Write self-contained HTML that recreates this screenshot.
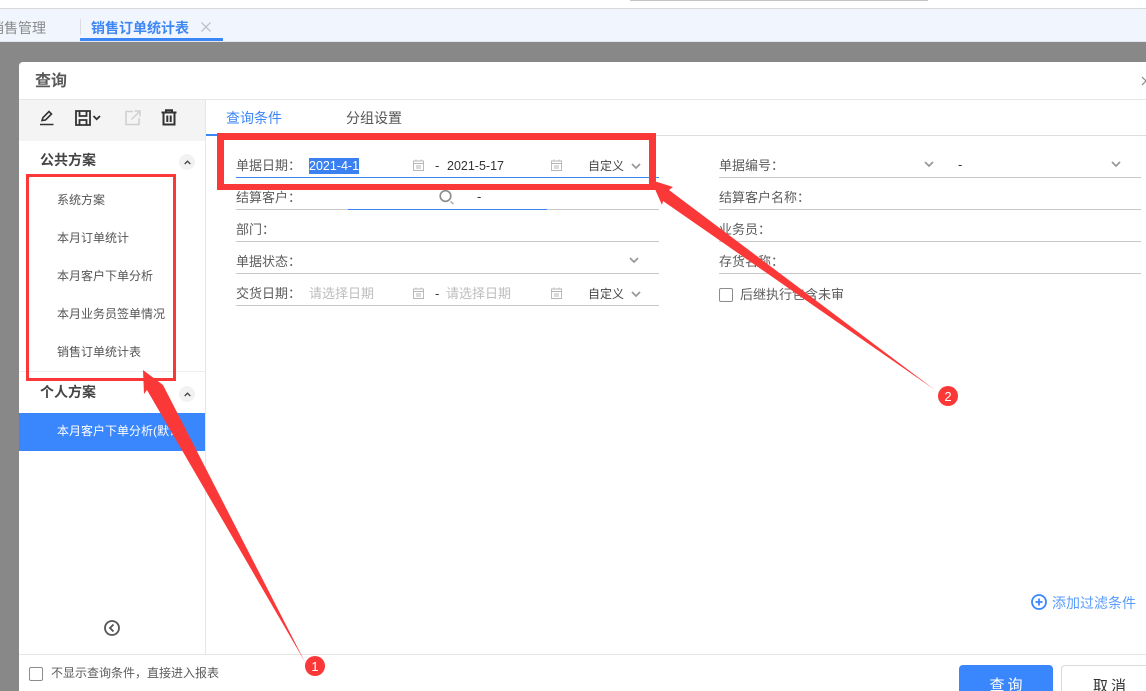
<!DOCTYPE html>
<html lang="zh">
<head>
<meta charset="utf-8">
<title>查询</title>
<style>
html,body{margin:0;padding:0;width:1146px;height:691px;overflow:hidden}
body{position:relative;background:#888;font-family:"Liberation Sans","Noto Sans CJK SC",sans-serif;font-size:13px;color:#555}
.a{position:absolute}
.t{position:absolute;white-space:nowrap;line-height:16px;font-size:13px;color:#5c5c5c}
.l{position:absolute;height:1px;background:#c8c8c8}
.b{position:absolute;height:1px;background:#3d86f5}
svg{position:absolute;overflow:visible}
.ph{color:#bdbdbd}
.blk{color:#333}
.d{font-size:12.500px}
.menu{position:absolute;left:57px;white-space:nowrap;font-size:12px;line-height:16px;color:#555}
.h{position:absolute;left:40px;font-size:14px;font-weight:bold;color:#444;line-height:18px;white-space:nowrap}
.cb{position:absolute;width:12px;height:12px;border:1px solid #8c8c8c;border-radius:2px;background:#fff}
</style>
</head>
<body>
<div class="a" style="left:0;top:0;width:1146px;height:8px;background:#fff"></div>
<div class="a" style="left:0;top:8px;width:1146px;height:1px;background:#d9d9d9"></div>
<div class="a" style="left:630px;top:0;width:298px;height:1px;background:#c4c4c4"></div>
<div class="a" style="left:0;top:9px;width:1146px;height:32px;background:#f0f5fe"></div>
<div class="a" style="left:0;top:41px;width:1146px;height:1px;background:#e3e6ea"></div>
<div class="a" style="left:0;top:18px;width:46px;height:20px;overflow:hidden"><span class="t" style="left:-10px;top:1px;font-size:14px;line-height:18px;color:#8a8a8a">销售管理</span></div>
<div class="a" style="left:80px;top:19px;width:1px;height:16px;background:#d9dde3"></div>
<span class="t" style="left:91px;top:19px;font-size:14px;line-height:18px;font-weight:bold;color:#3d86f5">销售订单统计表</span>
<svg style="left:201px;top:22px" width="10" height="10" viewBox="0 0 10 10"><path d="M.5.5l9 9M9.500.5l-9 9" stroke="#bcc2cc" stroke-width="1.300" fill="none"/></svg>
<div class="a" style="left:80px;top:38px;width:143px;height:3px;background:#3d86f5"></div>

<!-- dialog -->
<div class="a" style="left:19px;top:62px;width:1127px;height:629px;background:#fff;border-radius:4px 0 0 0"></div>
<span class="t" style="left:35px;top:71px;font-size:16px;line-height:22px;font-weight:bold;color:#5a5a5a">查询</span>
<svg style="left:1141px;top:76px" width="6" height="10" viewBox="0 0 6 10"><path d="M1 1l4 4-4 4" stroke="#8a8a8a" stroke-width="1.200" fill="none"/></svg>
<div class="a" style="left:19px;top:99px;width:1127px;height:1px;background:#e6e6e6"></div>

<!-- left toolbar -->
<div class="a" style="left:19px;top:100px;width:186px;height:41px;background:#f4f4f4"></div>
<div class="a" style="left:205px;top:100px;width:1px;height:554px;background:#e6e6e6"></div>
<svg style="left:39px;top:109px" width="16" height="17" viewBox="0 0 16 17"><path d="M3 11.500L4 8.500 10 2.500l2.500 2.500-6 6zM1 15.500h13.500" stroke="#333" stroke-width="1.600" fill="none"/></svg>
<svg style="left:75px;top:110px" width="28" height="16" viewBox="0 0 28 16"><path d="M1 1h14v14H1zM4.500 1v5h7V1M4.500 15V10h7v5" stroke="#333" stroke-width="1.800" fill="none"/><path d="M18.500 6l3.200 3.200L25 6" stroke="#333" stroke-width="1.800" fill="none"/></svg>
<svg style="left:125px;top:110px" width="16" height="16" viewBox="0 0 16 16"><path d="M8 1.500H1v13h13V8M6.500 9.500L14.500 1.500M9.500 1h5.500v5.500" stroke="#cfcfcf" stroke-width="1.500" fill="none"/></svg>
<svg style="left:161px;top:109px" width="16" height="17" viewBox="0 0 16 17"><path d="M.5 3.500h15M5 3.500V1.200h6v2.300M2.500 3.500v12h11v-12M6.300 6.500v6.500M9.700 6.500v6.500" stroke="#333" stroke-width="2" fill="none"/></svg>

<!-- left list -->
<span class="h" style="top:151px">公共方案</span>
<div class="a" style="left:179px;top:154px;width:16px;height:16px;border-radius:50%;background:#f2f2f2"></div>
<svg style="left:184px;top:160px" width="7" height="5" viewBox="0 0 7 5"><path d="M.7 4L3.500 1.200 6.300 4" stroke="#444" stroke-width="1.300" fill="none"/></svg>
<span class="menu" style="top:192px">系统方案</span>
<span class="menu" style="top:230px">本月订单统计</span>
<span class="menu" style="top:268px">本月客户下单分析</span>
<span class="menu" style="top:306px">本月业务员签单情况</span>
<span class="menu" style="top:344px">销售订单统计表</span>
<div class="a" style="left:19px;top:371px;width:186px;height:1px;background:#eee"></div>
<span class="h" style="top:383px">个人方案</span>
<div class="a" style="left:179px;top:386px;width:16px;height:16px;border-radius:50%;background:#f2f2f2"></div>
<svg style="left:184px;top:392px" width="7" height="5" viewBox="0 0 7 5"><path d="M.7 4L3.500 1.200 6.300 4" stroke="#444" stroke-width="1.300" fill="none"/></svg>
<div class="a" style="left:19px;top:413px;width:186px;height:38px;background:#3a87fd"></div>
<span class="menu" style="top:423px;color:#fff">本月客户下单分析(默认)</span>
<svg style="left:104px;top:620px" width="16" height="16" viewBox="0 0 16 16"><circle cx="8" cy="8" r="7" stroke="#555" stroke-width="1.800" fill="none"/><path d="M9.500 4.500L6 8l3.500 3.500" stroke="#555" stroke-width="1.800" fill="none"/></svg>

<!-- tabs -->
<span class="t" style="left:226px;top:109px;font-size:14px;line-height:18px;color:#3d86f5">查询条件</span>
<span class="t" style="left:346px;top:109px;font-size:14px;line-height:18px;color:#555">分组设置</span>
<div class="a" style="left:206px;top:135px;width:940px;height:1px;background:#dedede"></div>
<div class="a" style="left:206px;top:134px;width:80px;height:2px;background:#3d86f5"></div>

<!-- form left -->
<span class="t" style="left:236px;top:158px">单据日期：</span>
<span class="a d" style="left:309px;top:158px;height:16px;line-height:16px;background:#3a80f0;color:#fff;white-space:nowrap">2021-4-1</span>
<svg style="left:413px;top:159px" width="11" height="12" viewBox="0 0 11 12"><path d="M.5 2h10v9.500H.5zM.5 4.500h10M3 .5v2M8 .5v2M3 7h5M3 9h5" stroke="#b5b5b5" stroke-width=".9" fill="none"/></svg>
<span class="t blk" style="left:435px;top:158px">-</span>
<span class="t blk d" style="left:447px;top:158px">2021-5-17</span>
<svg style="left:551px;top:159px" width="11" height="12" viewBox="0 0 11 12"><path d="M.5 2h10v9.500H.5zM.5 4.500h10M3 .5v2M8 .5v2M3 7h5M3 9h5" stroke="#b5b5b5" stroke-width=".9" fill="none"/></svg>
<span class="t" style="left:588px;top:158px;font-size:12px;color:#444">自定义</span>
<svg style="left:631px;top:163px" width="10" height="7" viewBox="0 0 10 7"><path d="M1 1l4 4 4-4" stroke="#999" stroke-width="1.700" fill="none"/></svg>
<div class="b" style="left:236px;top:177px;width:423px"></div>

<span class="t" style="left:236px;top:190px">结算客户：</span>
<svg style="left:438px;top:189px" width="17" height="17" viewBox="0 0 17 17"><circle cx="7.500" cy="7" r="5.300" stroke="#8f8f8f" stroke-width="1.700" fill="none"/><path d="M12.500 12.500l3 2.500" stroke="#b0b0b0" stroke-width="1.500" fill="none"/></svg>
<span class="t blk" style="left:477px;top:189px">-</span>
<div class="l" style="left:236px;top:209px;width:423px"></div>
<div class="b" style="left:348px;top:209px;width:199px"></div>

<span class="t" style="left:236px;top:222px">部门：</span>
<div class="l" style="left:236px;top:241px;width:423px"></div>
<span class="t" style="left:236px;top:254px">单据状态：</span>
<svg style="left:629px;top:257px" width="10" height="7" viewBox="0 0 10 7"><path d="M1 1l4 4 4-4" stroke="#999" stroke-width="1.700" fill="none"/></svg>
<div class="l" style="left:236px;top:273px;width:423px"></div>

<span class="t" style="left:236px;top:286px">交货日期：</span>
<span class="t ph" style="left:309px;top:286px">请选择日期</span>
<svg style="left:413px;top:287px" width="11" height="12" viewBox="0 0 11 12"><path d="M.5 2h10v9.500H.5zM.5 4.500h10M3 .5v2M8 .5v2M3 7h5M3 9h5" stroke="#b5b5b5" stroke-width=".9" fill="none"/></svg>
<span class="t blk" style="left:435px;top:286px">-</span>
<span class="t ph" style="left:446px;top:286px">请选择日期</span>
<svg style="left:551px;top:287px" width="11" height="12" viewBox="0 0 11 12"><path d="M.5 2h10v9.500H.5zM.5 4.500h10M3 .5v2M8 .5v2M3 7h5M3 9h5" stroke="#b5b5b5" stroke-width=".9" fill="none"/></svg>
<span class="t" style="left:588px;top:286px;font-size:12px;color:#444">自定义</span>
<svg style="left:631px;top:291px" width="10" height="7" viewBox="0 0 10 7"><path d="M1 1l4 4 4-4" stroke="#999" stroke-width="1.700" fill="none"/></svg>
<div class="l" style="left:236px;top:305px;width:423px"></div>

<!-- form right -->
<span class="t" style="left:719px;top:158px">单据编号：</span>
<svg style="left:924px;top:161px" width="10" height="7" viewBox="0 0 10 7"><path d="M1 1l4 4 4-4" stroke="#999" stroke-width="1.700" fill="none"/></svg>
<span class="t blk" style="left:958px;top:157px">-</span>
<svg style="left:1111px;top:161px" width="10" height="7" viewBox="0 0 10 7"><path d="M1 1l4 4 4-4" stroke="#999" stroke-width="1.700" fill="none"/></svg>
<div class="l" style="left:719px;top:177px;width:422px"></div>
<span class="t" style="left:719px;top:190px">结算客户名称：</span>
<div class="l" style="left:719px;top:209px;width:422px"></div>
<span class="t" style="left:719px;top:222px">业务员：</span>
<div class="l" style="left:719px;top:241px;width:422px"></div>
<span class="t" style="left:719px;top:254px">存货名称：</span>
<div class="l" style="left:719px;top:273px;width:422px"></div>
<div class="cb" style="left:719px;top:288px"></div>
<span class="t" style="left:740px;top:287px">后继执行包含未审</span>

<!-- add filter -->
<svg style="left:1031px;top:594px" width="16" height="16" viewBox="0 0 16 16"><circle cx="8" cy="8" r="7" stroke="#3a87fd" stroke-width="1.800" fill="none"/><path d="M8 4.500v7M4.500 8h7" stroke="#3a87fd" stroke-width="1.800" fill="none"/></svg>
<span class="t" style="left:1052px;top:595px;font-size:14px;color:#5a9bfb">添加过滤条件</span>

<!-- footer -->
<div class="a" style="left:19px;top:654px;width:1127px;height:1px;background:#e6e6e6"></div>
<div class="cb" style="left:29px;top:667px"></div>
<span class="t" style="left:51px;top:665px;font-size:12px">不显示查询条件，直接进入报表</span>
<div class="a" style="left:959px;top:665px;width:94px;height:40px;border-radius:4px;background:#3a87fd;color:#fff;text-align:center;text-indent:3px;font-size:15px;line-height:41px;letter-spacing:3px">查询</div>
<div class="a" style="left:1061px;top:665px;width:100px;height:40px;border-radius:4px;border:1px solid #d9d9d9;box-sizing:border-box;background:#fff;color:#333;text-align:left;padding-left:31px;font-size:15px;line-height:41px;letter-spacing:3px">取消</div>

<!-- annotations -->
<div class="a" style="left:26px;top:174px;width:150px;height:207px;box-sizing:border-box;border:3px solid #fb3838"></div>
<div class="a" style="left:217px;top:133px;width:439px;height:57px;box-sizing:border-box;border:7px solid #fb3838;border-bottom-width:6px"></div>
<svg style="left:0;top:0" width="1146" height="691" viewBox="0 0 1146 691">
<polygon points="143,370 163,385 305,662 147,390 144,394" fill="#fb3838"/>
<polygon points="651,180 673,187 669,190 935,390 663,201 662,205" fill="#fb3838"/>
<circle cx="315" cy="666" r="10" fill="#fb3838"/>
<circle cx="948" cy="396" r="10" fill="#fb3838"/>
<text x="315" y="671" font-size="13" fill="#fff" text-anchor="middle" font-family="Liberation Sans">1</text>
<text x="948" y="401" font-size="13" fill="#fff" text-anchor="middle" font-family="Liberation Sans">2</text>
</svg>
</body>
</html>
